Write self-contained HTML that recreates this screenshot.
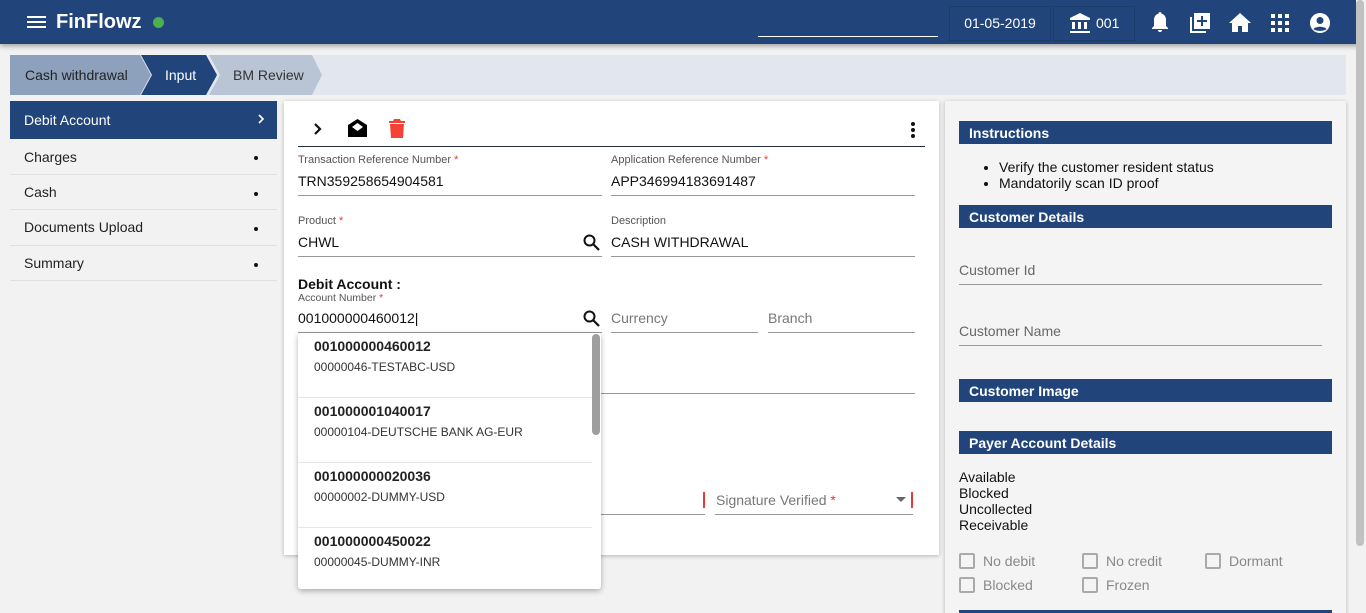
<!DOCTYPE html>
<html style="width:1366px;height:613px;overflow:hidden"><head><style>
*{margin:0;padding:0;box-sizing:border-box}
body{width:1366px;height:613px;overflow:hidden;background:#f2f2f2;font-family:"Liberation Sans",sans-serif;position:relative;color:#111}
.a{position:absolute}
.hdr{left:0;top:0;width:1366px;height:44px;background:#21457a;box-shadow:0 2px 5px rgba(0,0,0,.35)}
.lbl{font-size:11px;color:#555}
.val{font-size:14px;color:#111}
.ln{height:1px;background:#999}
.nav{left:10px;width:267px;font-size:14px;color:#222;border-bottom:1px solid #e0e0e0;height:36px;line-height:36px;padding-left:14px}
.nav b{position:absolute;right:19px;top:17px;width:4px;height:4px;border-radius:2px;background:#111}
.sec{left:959px;width:373px;height:23px;background:#21457a;color:#fff;font-weight:bold;font-size:14px;line-height:24px;padding-left:10px}
.cb{width:16px;height:16px;border:2px solid #aaa;border-radius:2px}
.ct{font-size:14px;color:#888}
.dd div.it{height:65px;border-bottom:1px solid #e6e6e6;padding:5px 0 0 16px;width:294px}
.it p{font-weight:bold;font-size:14px;color:#222;margin-bottom:4px}
.it span{font-size:12px;color:#333}
</style></head><body>
<div class="a hdr">
 <div class="a" style="left:27px;top:16px;width:19px;height:2px;background:#fff;box-shadow:0 5px 0 #fff,0 10px 0 #fff"></div>
 <div class="a" style="left:56px;top:11px;color:#fff;font-weight:bold;font-size:20px">FinFlowz</div>
 <div class="a" style="left:153px;top:17px;width:11px;height:11px;border-radius:50%;background:#4caf50"></div>
 <div class="a" style="left:758px;top:36px;width:180px;height:1px;background:#fff"></div>
 <div class="a" style="left:949px;top:6px;width:102px;height:35px;border:1px solid #1c3c6c;color:#fff;font-size:14px;line-height:33px;text-align:center">01-05-2019</div>
 <div class="a" style="left:1053px;top:6px;width:82px;height:35px;border:1px solid #1c3c6c;color:#fff;font-size:14px;line-height:33px;padding-left:42px">001</div>
 <svg class="a" style="left:1068px;top:12px" width="24" height="22" viewBox="0 0 24 22" fill="#fff"><path d="M12 1L2 6v2h20V6z M4 10h3v7H4z M10 10h3v7h-3z M16 10h3v7h-3z M2 19h20v2H2z"/></svg>
 <svg class="a" style="left:1150px;top:12px" width="20" height="22" viewBox="0 0 20 22" fill="#fff"><path d="M10 0c1 0 1.5.8 1.5 1.6C14.5 2.4 16 5 16 8v6l2 2v1H2v-1l2-2V8c0-3 1.5-5.6 4.5-6.4C8.5.8 9 0 10 0zM8 18h4a2 2 0 0 1-4 0z"/></svg>
 <svg class="a" style="left:1189px;top:12px" width="22" height="22" viewBox="0 0 22 22" fill="#fff"><path d="M1 5h2v14h14v2H1z"/><path d="M5 1h16v16H5z M12 4v4H8v2h4v4h2v-4h4V8h-4V4z" fill-rule="evenodd"/></svg>
 <svg class="a" style="left:1229px;top:13px" width="22" height="19" viewBox="0 0 22 19" fill="#fff"><path d="M11 0L0 10h3v9h6v-6h4v6h6v-9h3z"/></svg>
 <svg class="a" style="left:1271px;top:14px" width="18" height="18" viewBox="0 0 18 18" fill="#fff"><path d="M0 0h4v4H0zM7 0h4v4H7zM14 0h4v4h-4zM0 7h4v4H0zM7 7h4v4H7zM14 7h4v4h-4zM0 14h4v4H0zM7 14h4v4H7zM14 14h4v4h-4z"/></svg>
 <svg class="a" style="left:1309px;top:12px" width="22" height="22" viewBox="0 0 22 22"><circle cx="11" cy="11" r="10" fill="#fff"/><circle cx="11" cy="8.5" r="3.5" fill="#21457a"/><path d="M4.5 17c2-3 11-3 13 0c-2 2.5-11 2.5-13 0z" fill="#21457a"/></svg>
</div>
<div class="a" style="left:1356px;top:0;width:10px;height:613px;background:#f2f2f2"></div>
<div class="a" style="left:1356px;top:0;width:8px;height:546px;background:#c1c1c1;border-radius:4px"></div>
<div class="a" style="left:10px;top:55px;width:1336px;height:40px;background:#e2e7ef"></div>
<svg class="a" style="left:10px;top:55px" width="315" height="40"><polygon points="0,0 130,0 141,20 130,40 0,40" fill="#8ea1bc"/><polygon points="131,0 196,0 207,20 196,40 131,40 142,20" fill="#21457a"/><polygon points="199,0 302,0 312,20 302,40 199,40 210,20" fill="#b9c5d5"/></svg>
<div class="a" style="left:25px;top:67px;font-size:14px;color:#222">Cash withdrawal</div>
<div class="a" style="left:165px;top:67px;font-size:14px;color:#fff">Input</div>
<div class="a" style="left:233px;top:67px;font-size:14px;color:#333">BM Review</div>
<div class="a" style="left:10px;top:101px;width:267px;height:38px;background:#21457a;color:#fff;font-size:14px;line-height:38px;padding-left:14px">Debit Account
<svg style="position:absolute;right:12px;top:12px" width="8" height="12" viewBox="0 0 8 12"><path d="M2 2l4 4-4 4" stroke="#fff" stroke-width="1.6" fill="none"/></svg></div>
<div class="a nav" style="top:139px">Charges<b></b></div>
<div class="a nav" style="top:175px;height:35px;line-height:35px">Cash<b></b></div>
<div class="a nav" style="top:210px;height:36px;line-height:34px">Documents Upload<b></b></div>
<div class="a nav" style="top:246px;height:35px;line-height:35px">Summary<b></b></div>
<div class="a" style="left:284px;top:101px;width:655px;height:454px;background:#fff;box-shadow:0 1px 4px rgba(0,0,0,.25)"></div>
<svg class="a" style="left:312px;top:121px" width="12" height="16" viewBox="0 0 12 16"><path d="M3 3l5 5-5 5" stroke="#111" stroke-width="2.2" fill="none"/></svg>
<svg class="a" style="left:347px;top:118px" width="21" height="20" viewBox="0 0 21 20"><path d="M10.5 1L1 7v12h19V7z" fill="#000"/><path d="M10.5 5L5 9l5.5 4 5.5-4z" fill="#fff"/></svg>
<svg class="a" style="left:389px;top:119px" width="16" height="19" viewBox="0 0 16 19" fill="#f44336"><path d="M5 0h6l1 2h4v2H0V2h4zM1 5h14l-1 14H2z"/></svg>
<div class="a" style="left:911px;top:122px;width:4px;height:4px;border-radius:2px;background:#111;box-shadow:0 6px 0 #111,0 12px 0 #111"></div>
<div class="a" style="left:298px;top:146px;width:627px;height:1px;background:#1d2b45"></div>
<div class="a lbl" style="left:298px;top:154px">Transaction Reference Number <span style="color:#e53935">*</span></div>
<div class="a val" style="left:298px;top:173px">TRN359258654904581</div>
<div class="a ln" style="left:298px;top:195px;width:304px"></div>
<div class="a lbl" style="left:611px;top:154px">Application Reference Number <span style="color:#e53935">*</span></div>
<div class="a val" style="left:611px;top:173px">APP346994183691487</div>
<div class="a ln" style="left:611px;top:195px;width:304px"></div>
<div class="a lbl" style="left:298px;top:215px">Product <span style="color:#e53935">*</span></div>
<div class="a val" style="left:298px;top:234px">CHWL</div>
<div class="a ln" style="left:298px;top:256px;width:304px"></div>
<div class="a lbl" style="left:611px;top:215px">Description</div>
<div class="a val" style="left:611px;top:234px">CASH WITHDRAWAL</div>
<div class="a ln" style="left:611px;top:256px;width:304px"></div>
<svg class="a" style="left:583px;top:234px" width="17" height="17" viewBox="0 0 17 17"><circle cx="6.5" cy="6.5" r="5" stroke="#111" stroke-width="2" fill="none"/><path d="M10 10l6 6" stroke="#111" stroke-width="2.2"/></svg>
<div class="a" style="left:298px;top:276px;font-weight:bold;font-size:14px">Debit Account :</div>
<div class="a lbl" style="left:298px;top:292px;font-size:10.5px">Account Number <span style="color:#e53935">*</span></div>
<div class="a val" style="left:298px;top:310px">001000000460012<span style="font-weight:100">|</span></div>
<div class="a ln" style="left:298px;top:332px;width:304px"></div>
<svg class="a" style="left:583px;top:310px" width="17" height="17" viewBox="0 0 17 17"><circle cx="6.5" cy="6.5" r="5" stroke="#111" stroke-width="2" fill="none"/><path d="M10 10l6 6" stroke="#111" stroke-width="2.2"/></svg>
<div class="a" style="left:611px;top:310px;font-size:14px;color:#777">Currency</div>
<div class="a ln" style="left:611px;top:332px;width:147px"></div>
<div class="a" style="left:768px;top:310px;font-size:14px;color:#777">Branch</div>
<div class="a ln" style="left:768px;top:332px;width:147px"></div>
<div class="a ln" style="left:560px;top:393px;width:355px"></div>
<div class="a ln" style="left:560px;top:514px;width:145px"></div>
<div class="a" style="left:703px;top:492px;width:2px;height:16px;background:#e53935"></div>
<div class="a" style="left:716px;top:492px;font-size:14px;color:#777">Signature Verified <span style="color:#e53935">*</span></div>
<div class="a" style="left:896px;top:497px;border:5px solid transparent;border-top:5px solid #666"></div>
<div class="a" style="left:911px;top:492px;width:2px;height:16px;background:#e53935"></div>
<div class="a ln" style="left:715px;top:514px;width:198px"></div>
<div class="a dd" style="left:298px;top:333px;width:303px;height:256px;background:#fff;border-radius:3px;box-shadow:0 2px 6px rgba(0,0,0,.3);overflow:hidden">
 <div class="it"><p>001000000460012</p><span>00000046-TESTABC-USD</span></div>
 <div class="it"><p>001000001040017</p><span>00000104-DEUTSCHE BANK AG-EUR</span></div>
 <div class="it"><p>001000000020036</p><span>00000002-DUMMY-USD</span></div>
 <div class="it" style="border:0"><p>001000000450022</p><span>00000045-DUMMY-INR</span></div>
 <div class="a" style="left:294px;top:1px;width:8px;height:101px;background:#9e9e9e;border-radius:4px"></div>
</div>
<div class="a" style="left:945px;top:101px;width:401px;height:520px;background:#f4f4f4;box-shadow:0 1px 4px rgba(0,0,0,.25)"></div>
<div class="a sec" style="top:121px">Instructions</div>
<ul class="a" style="left:999px;top:159px;font-size:14px;line-height:16px">
<li>Verify the customer resident status</li><li>Mandatorily scan ID proof</li></ul>
<div class="a sec" style="top:205px">Customer Details</div>
<div class="a" style="left:959px;top:262px;font-size:14px;color:#666">Customer Id</div>
<div class="a ln" style="left:959px;top:284px;width:363px"></div>
<div class="a" style="left:959px;top:323px;font-size:14px;color:#666">Customer Name</div>
<div class="a ln" style="left:959px;top:345px;width:363px"></div>
<div class="a sec" style="top:379px">Customer Image</div>
<div class="a sec" style="top:431px">Payer Account Details</div>
<div class="a" style="left:959px;top:469px;font-size:14px;line-height:16px">Available<br>Blocked<br>Uncollected<br>Receivable</div>
<div class="a cb" style="left:959px;top:553px"></div><div class="a ct" style="left:983px;top:553px">No debit</div>
<div class="a cb" style="left:1082px;top:553px"></div><div class="a ct" style="left:1106px;top:553px">No credit</div>
<div class="a cb" style="left:1205px;top:553px"></div><div class="a ct" style="left:1229px;top:553px">Dormant</div>
<div class="a cb" style="left:959px;top:577px"></div><div class="a ct" style="left:983px;top:577px">Blocked</div>
<div class="a cb" style="left:1082px;top:577px"></div><div class="a ct" style="left:1106px;top:577px">Frozen</div>
<div class="a" style="left:959px;top:610px;width:373px;height:3px;background:#21457a"></div>
</body></html>
